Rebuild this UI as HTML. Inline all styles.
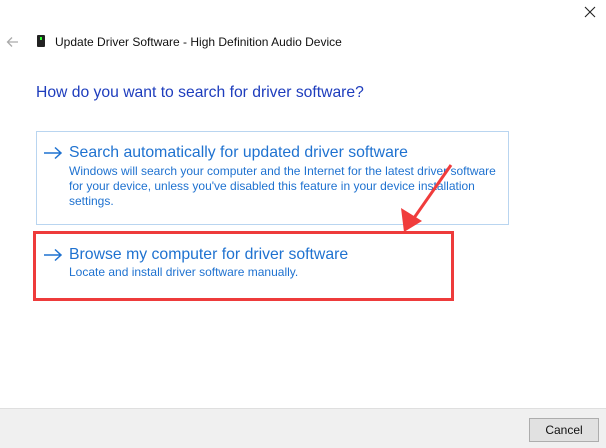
<!DOCTYPE html>
<html><head><style>
body{margin:0;width:606px;height:447px;background:#fff;position:relative;overflow:hidden;font-family:"Segoe UI","Liberation Sans",sans-serif}
.a{position:absolute;white-space:nowrap}
.b{color:#1f72d0}
</style></head><body>
<svg class="a" style="left:584px;top:6px" width="12" height="12"><path d="M1 1L11 11M11 1L1 11" stroke="#222" stroke-width="1.1"/></svg>
<svg class="a" style="left:6px;top:36px" width="13" height="12"><path d="M12 6H2M6 1.5L1.5 6L6 10.5" stroke="#aaa" stroke-width="1.3" fill="none"/></svg>
<div class="a" style="left:37px;top:35px;width:8px;height:12px;background:#222;border-radius:1px"></div>
<div class="a" style="left:40px;top:37px;width:2px;height:3px;background:#3f3"></div>
<div class="a" style="left:55px;top:35px;font-size:12px;color:#111">Update Driver Software - High Definition Audio Device</div>
<div class="a" style="left:36px;top:84px;font-size:15.7px;color:#1e3dbd">How do you want to search for driver software?</div>
<div class="a" style="left:36px;top:131px;width:471px;height:92px;border:1px solid #b9d5f0"></div>
<svg class="a" style="left:43px;top:146px" width="20" height="14"><path d="M1 7H18M12 1.5L18 7L12 12.5" stroke="#1f72d0" stroke-width="1.5" fill="none"/></svg>
<div class="a b" style="left:69px;top:144px;font-size:15.8px">Search automatically for updated driver software</div>
<div class="a b" style="left:69px;top:164px;font-size:12px;line-height:15px">Windows will search your computer and the Internet for the latest driver software<br>for your device, unless you've disabled this feature in your device installation<br>settings.</div>
<div class="a" style="left:33px;top:231px;width:415px;height:64px;border:3px solid #ee3b3b"></div>
<svg class="a" style="left:43px;top:248px" width="20" height="14"><path d="M1 7H18M12 1.5L18 7L12 12.5" stroke="#1f72d0" stroke-width="1.5" fill="none"/></svg>
<div class="a b" style="left:69px;top:246px;font-size:15.8px">Browse my computer for driver software</div>
<div class="a b" style="left:69px;top:265px;font-size:12px">Locate and install driver software manually.</div>
<svg class="a" style="left:0;top:0" width="606" height="447"><path d="M451 165L414 218" stroke="#f03c3c" stroke-width="3"/><polygon points="404,232 401,208 422,221" fill="#f03c3c"/></svg>
<div class="a" style="left:0;top:408px;width:606px;height:39px;background:#f0f0f0;border-top:1px solid #dfdfdf"></div>
<div class="a" style="left:529px;top:418px;width:68px;height:22px;background:#e1e1e1;border:1px solid #adadad;font-size:12px;text-align:center;line-height:22px;color:#111">Cancel</div>
</body></html>
